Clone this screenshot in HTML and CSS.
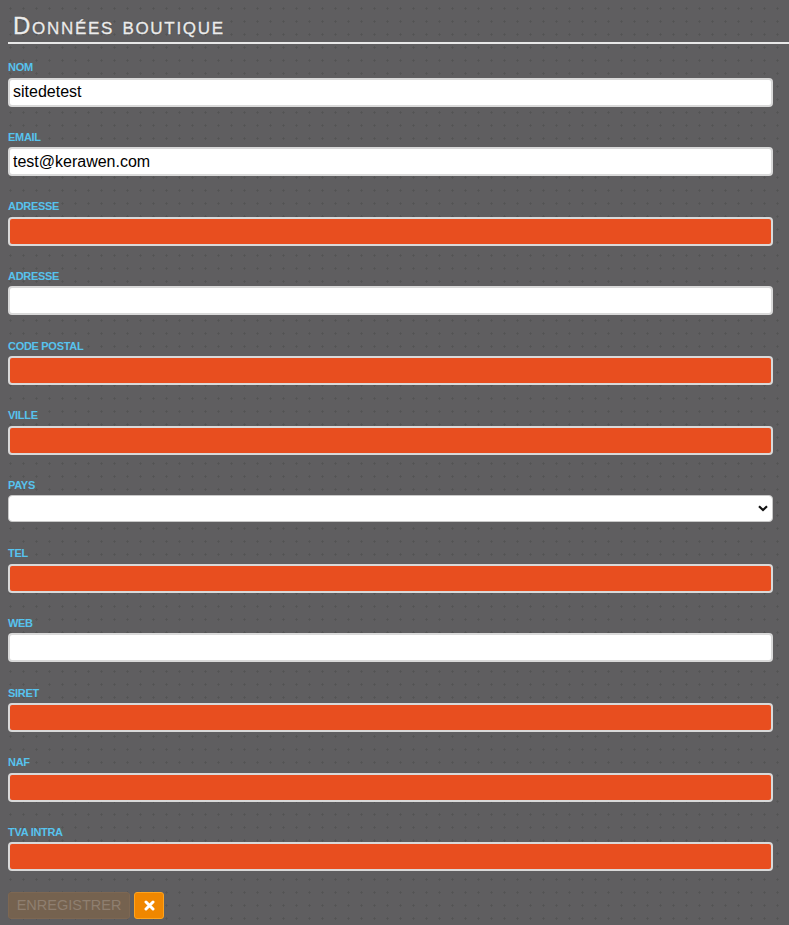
FILE: index.html
```html
<!DOCTYPE html>
<html lang="fr">
<head>
<meta charset="utf-8">
<title>Données boutique</title>
<link rel="stylesheet" href="styles.css">
</head>
<body>
<h1 class="title">Données boutique</h1>
<form class="form">
  <div class="field"><label class="lbl">Nom</label><input class="inp" type="text" value="sitedetest"></div>
  <div class="field"><label class="lbl">Email</label><input class="inp" type="text" value="test@kerawen.com"></div>
  <div class="field"><label class="lbl">Adresse</label><input class="inp err" type="text"></div>
  <div class="field"><label class="lbl">Adresse</label><input class="inp" type="text"></div>
  <div class="field"><label class="lbl">Code postal</label><input class="inp err" type="text"></div>
  <div class="field"><label class="lbl">Ville</label><input class="inp err" type="text"></div>
  <div class="field field-select"><label class="lbl">Pays</label>
    <div class="selwrap">
      <select class="sel"><option></option></select>
      <svg class="chev" width="10" height="7" viewBox="0 0 10 7"><path d="M1 1.2 L5 5 L9 1.2" fill="none" stroke="#111" stroke-width="2.2"/></svg>
    </div>
  </div>
  <div class="field"><label class="lbl">Tel</label><input class="inp err" type="text"></div>
  <div class="field"><label class="lbl">Web</label><input class="inp" type="text"></div>
  <div class="field"><label class="lbl">Siret</label><input class="inp err" type="text"></div>
  <div class="field"><label class="lbl">Naf</label><input class="inp err" type="text"></div>
  <div class="field"><label class="lbl">TVA intra</label><input class="inp err" type="text"></div>
  <div class="actions">
    <button type="button" class="btn-save" disabled>Enregistrer</button>
    <button type="button" class="btn-cancel"><svg width="11" height="11" viewBox="0 0 11 11"><path d="M2 2 L9 9 M9 2 L2 9" stroke="#fff" stroke-width="3" stroke-linecap="round"/></svg></button>
  </div>
</form>
</body>
</html>
```
FILE: styles.css
```css
html, body {
  margin: 0;
  padding: 0;
}
body {
  padding-left: 8px;
  background-color: #5f5e60;
  background-image: radial-gradient(circle, #535354 0.9px, transparent 1.3px);
  background-size: 13px 13px;
  background-position: 4px 2px;
  font-family: "Liberation Sans", Arial, sans-serif;
  min-height: 925px;
  box-sizing: border-box;
}
.title {
  margin: 12px 0 0 0;
  padding: 0 0 2px 5px;
  font-size: 24px;
  line-height: 28px;
  font-weight: normal;
  font-variant: small-caps;
  letter-spacing: 1.7px;
  color: #ececec;
  -webkit-text-stroke: 0.35px #ececec;
  text-shadow: 0 0 1px #2a2a2a;
  border-bottom: 2px solid #e8e8e8;
}
.form {
  margin: 17px 16px 0 0;
  display: flex;
  flex-direction: column;
}
.field {
  display: flex;
  flex-direction: column;
  margin-bottom: 24.15px;
}
.lbl {
  display: block;
  font-size: 11px;
  line-height: 13px;
  font-weight: bold;
  text-transform: uppercase;
  color: #57c3ee;
  letter-spacing: -0.3px;
  margin-bottom: 3.5px;
}
.inp {
  box-sizing: border-box;
  width: 100%;
  height: 29px;
  margin: 0;
  border: 2px solid #d9d9d9;
  border-radius: 4px;
  background: #fff;
  padding: 0 3px;
  font-family: "Liberation Sans", Arial, sans-serif;
  font-size: 16px;
  color: #000;
  outline: none;
}
.inp.err {
  background: #e84e1f;
}
.selwrap {
  position: relative;
}
.sel {
  box-sizing: border-box;
  width: 100%;
  height: 27px;
  margin: 0;
  border: 1px solid #c8c8c8;
  border-radius: 4px;
  background: #fff;
  -webkit-appearance: none;
  appearance: none;
  font-family: "Liberation Sans", Arial, sans-serif;
  font-size: 14px;
}
.field-select {
  margin-bottom: 25px;
}
.chev {
  position: absolute;
  right: 5px;
  top: 10px;
}
.actions {
  display: flex;
  gap: 4px;
  margin-top: -4px;
}
.btn-save {
  box-sizing: border-box;
  height: 27px;
  width: 122px;
  padding: 0;
  border: 1px solid #7d6752;
  border-radius: 3px;
  background: #75624f;
  color: #8f7f70;
  font-family: "Liberation Sans", Arial, sans-serif;
  font-size: 14.5px;
  text-transform: uppercase;
}
.btn-cancel {
  box-sizing: border-box;
  height: 27px;
  width: 30px;
  padding: 0;
  border: 1px solid #ffa41e;
  border-radius: 3px;
  background: #f08700;
  display: flex;
  align-items: center;
  justify-content: center;
}
```
